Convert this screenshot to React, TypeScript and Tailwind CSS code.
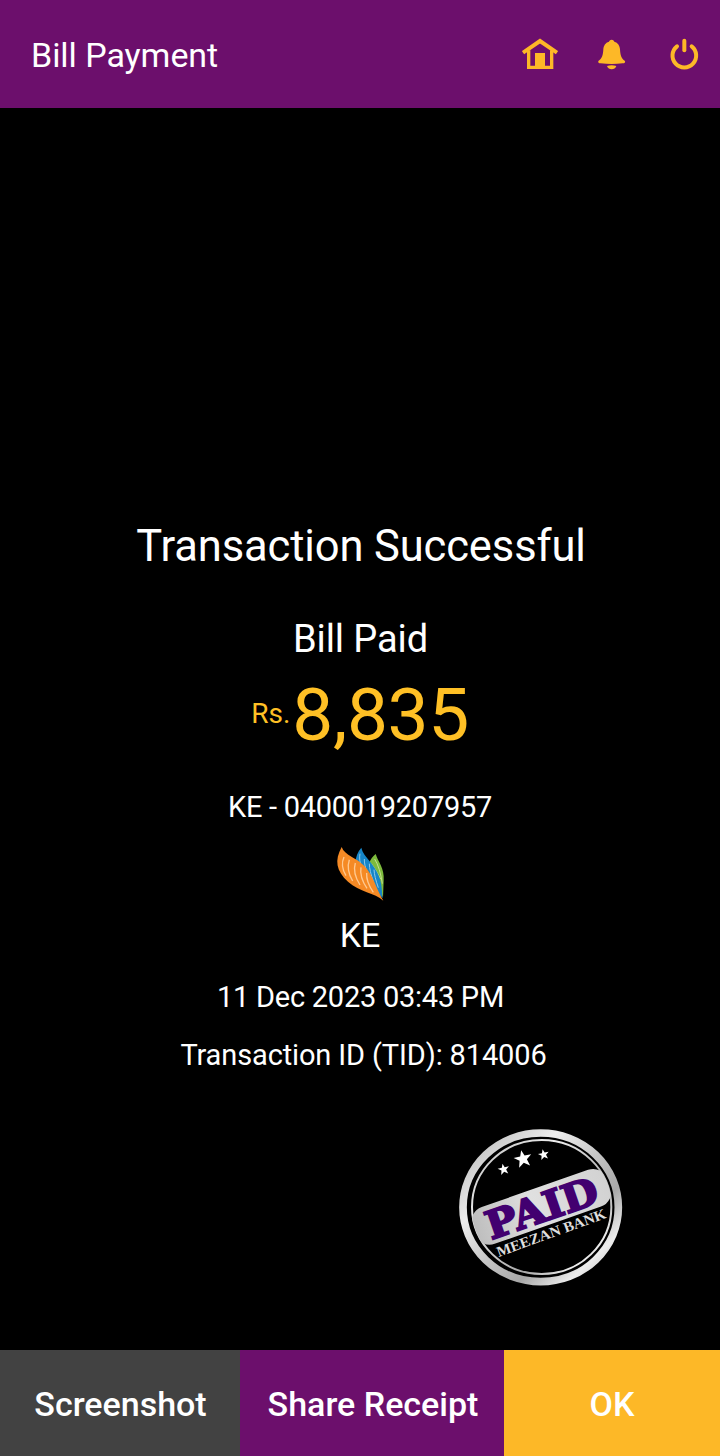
function HomeIcon() {
  return (
    <svg className="size-9" viewBox="66 48 108 108" fill="none" stroke="#fdb827" strokeWidth="9">
      <path d="M69 98 L120 63 L171 98" strokeWidth="12" />
      <path d="M86 91 V142 H155 V91" strokeWidth="10" />
      <path d="M105 99 H135 V143 H105 Z" fill="#fdb827" stroke="none" />
    </svg>
  );
}

function BellIcon() {
  return (
    <svg className="size-9" viewBox="282 48 108 108" fill="#fdb827">
      <path d="M335 59 C340 59 342 62 343 65 C354 68 359 77 360 88 C361 106 364 116 375 123 Q377 130 368 130 Q335 134 302 130 Q293 130 295 123 C306 116 309 106 310 88 C311 77 316 68 327 65 C328 62 330 59 335 59 Z" />
      <path d="M321 138 Q335 134 349 138 Q345 148 335 148 Q325 148 321 138 Z" />
    </svg>
  );
}

function PowerIcon() {
  return (
    <svg className="size-9" viewBox="498 48 108 108" fill="none" stroke="#fdb827" strokeWidth="12" strokeLinecap="round">
      <path d="M531 79 A35.500 35.500 0 1 0 575 79" />
      <path d="M553 62 V91" />
    </svg>
  );
}

function KeLogo() {
  return (
    <svg className="h-20 w-20 shrink-0" viewBox="0 0 240 240" fill="none">
      <path d="M167 57 C174 80 194 100 191 136 L189 188 C180 160 165 125 148 86 C150 74 158 64 167 57 Z" fill="#7dba3c" />
      <path d="M164 72 Q180 98 187 146 M154 86 Q168 104 182 132" stroke="#c4df8f" strokeWidth="3" />
      <path d="M124 38 C130 66 164 86 177 124 C187 152 185 170 188 190 C160 160 126 122 106 84 C107 66 113 50 124 38 Z" fill="#1685c7" />
      <path d="M120 56 Q116 74 126 102 M133 72 Q132 88 144 122 M148 86 Q148 106 161 142 M162 104 Q163 124 175 158" stroke="#90c9e7" strokeWidth="3" />
      <path d="M65 36 C74 62 108 66 134 94 C161 124 168 160 190 197 C164 172 119 172 84 140 C48 108 43 76 65 36 Z" fill="#f58a25" />
      <path d="M72 66 Q60 92 78 122 M88 74 Q78 104 98 138 M106 84 Q97 114 120 150 M123 97 Q118 126 141 160 M140 114 Q138 140 160 172" stroke="#ffc990" strokeWidth="4" />
    </svg>
  );
}

const star = "M0 -24 L6 -8 L24 -8 L10 3 L15 21 L0 10 L-15 21 L-10 3 L-24 -8 L-6 -8 Z";

function PaidStamp() {
  return (
    <svg className="h-[175px] w-[180px]" viewBox="0 0 540 525">
      <defs>
        <linearGradient id="metal" x1="0" y1="0" x2="1" y2="1">
          <stop offset="0" stopColor="#b3b3b3" />
          <stop offset=".3" stopColor="#eeeeee" />
          <stop offset=".5" stopColor="#c6c6c6" />
          <stop offset=".68" stopColor="#a8a8a8" />
          <stop offset=".84" stopColor="#ededed" />
          <stop offset="1" stopColor="#b0b0b0" />
        </linearGradient>
        <linearGradient id="band">
          <stop offset="0" stopColor="#bdbdbd" />
          <stop offset=".45" stopColor="#e0e0e0" />
          <stop offset="1" stopColor="#d2d2d2" />
        </linearGradient>
        <clipPath id="disc">
          <ellipse cx="275" cy="261" rx="211" ry="203" />
        </clipPath>
      </defs>
      <ellipse cx="272" cy="262" rx="233" ry="223" fill="none" stroke="url(#metal)" strokeWidth="23" />
      <ellipse cx="275" cy="261" rx="209" ry="201" fill="none" stroke="url(#metal)" strokeWidth="6" />
      <g clipPath="url(#disc)">
        <rect x="-215" y="-58" width="430" height="117" rx="46" transform="translate(274 260) rotate(-19.300)" fill="url(#band)" />
      </g>
      <g fill="#ffffff">
        <path d={star} transform="translate(161 148) rotate(-12) scale(.72)" />
        <path d={star} transform="translate(219 117) rotate(-12) scale(1.120)" />
        <path d={star} transform="translate(281 104) rotate(-12) scale(.68)" />
      </g>
      <text
        transform="translate(124 359) rotate(-19)"
        className="font-['DejaVu_Serif',serif] text-[116px] font-bold"
        textLength="348"
        lengthAdjust="spacingAndGlyphs"
        fill="#420070"
        stroke="#420070"
        strokeWidth="6"
      >
        PAID
      </text>
      <text
        transform="translate(146 411) rotate(-20)"
        className="font-['Liberation_Serif',serif] text-[44px] font-bold"
        textLength="346"
        lengthAdjust="spacingAndGlyphs"
        fill="#dedede"
      >
        MEEZAN BANK
      </text>
    </svg>
  );
}

export default function App() {
  return (
    <div className="flex h-[1456px] w-[720px] flex-col overflow-hidden bg-black font-[Roboto,sans-serif] whitespace-nowrap text-white">
      <header className="flex h-[108px] shrink-0 items-center justify-between bg-[#6c0f6c] pr-[18px] pl-[31px]">
        <h1 className="pt-0.5 text-[34px] leading-[40px] tracking-[-0.05px]">Bill Payment</h1>
        <nav className="flex gap-9">
          <HomeIcon />
          <BellIcon />
          <PowerIcon />
        </nav>
      </header>

      <main className="flex flex-1 flex-col items-center pt-[409px]">
        <h2 className="h-[60px] pl-0.5 text-[43.500px] leading-[60px] tracking-[-0.12px]">Transaction Successful</h2>
        <p className="mt-[37px] h-[50px] pl-px text-[38px] leading-[50px] tracking-[-0.1px]">Bill Paid</p>
        <div className="mt-[8px] flex h-[86px] items-center text-[#ffc025]">
          <span className="pb-0.5 text-[28px] leading-[82px]">Rs.</span>
          <span className="pl-0.5 text-[73px] leading-[86px] tracking-[-0.4px]">8,835</span>
        </div>
        <p className="mt-[29px] h-10 text-[29px] leading-10 tracking-[-0.28px]">KE - 0400019207957</p>
        <div className="mt-[8px] h-20">
          <KeLogo />
        </div>
        <p className="h-10 text-[34px] leading-10">KE</p>
        <p className="mt-[22px] h-10 pl-px text-[29px] leading-10 tracking-[-0.25px]">11 Dec 2023 03:43 PM</p>
        <p className="mt-[18px] h-10 pl-[7px] text-[29px] leading-10 tracking-[-0.13px]">Transaction ID (TID): 814006</p>
        <div className="mt-[45px] mr-[90px] self-end">
          <PaidStamp />
        </div>
      </main>

      <footer className="flex h-[106px] shrink-0 text-[34px] leading-[40px] font-medium">
        <button className="w-60 bg-[#424242] pt-0.5 pl-px">Screenshot</button>
        <button className="w-[264px] bg-[#6c0f6c] pt-0.5 pl-0.5">Share Receipt</button>
        <button className="w-[216px] bg-[#fdb827] pt-0.5">OK</button>
      </footer>
    </div>
  );
}
